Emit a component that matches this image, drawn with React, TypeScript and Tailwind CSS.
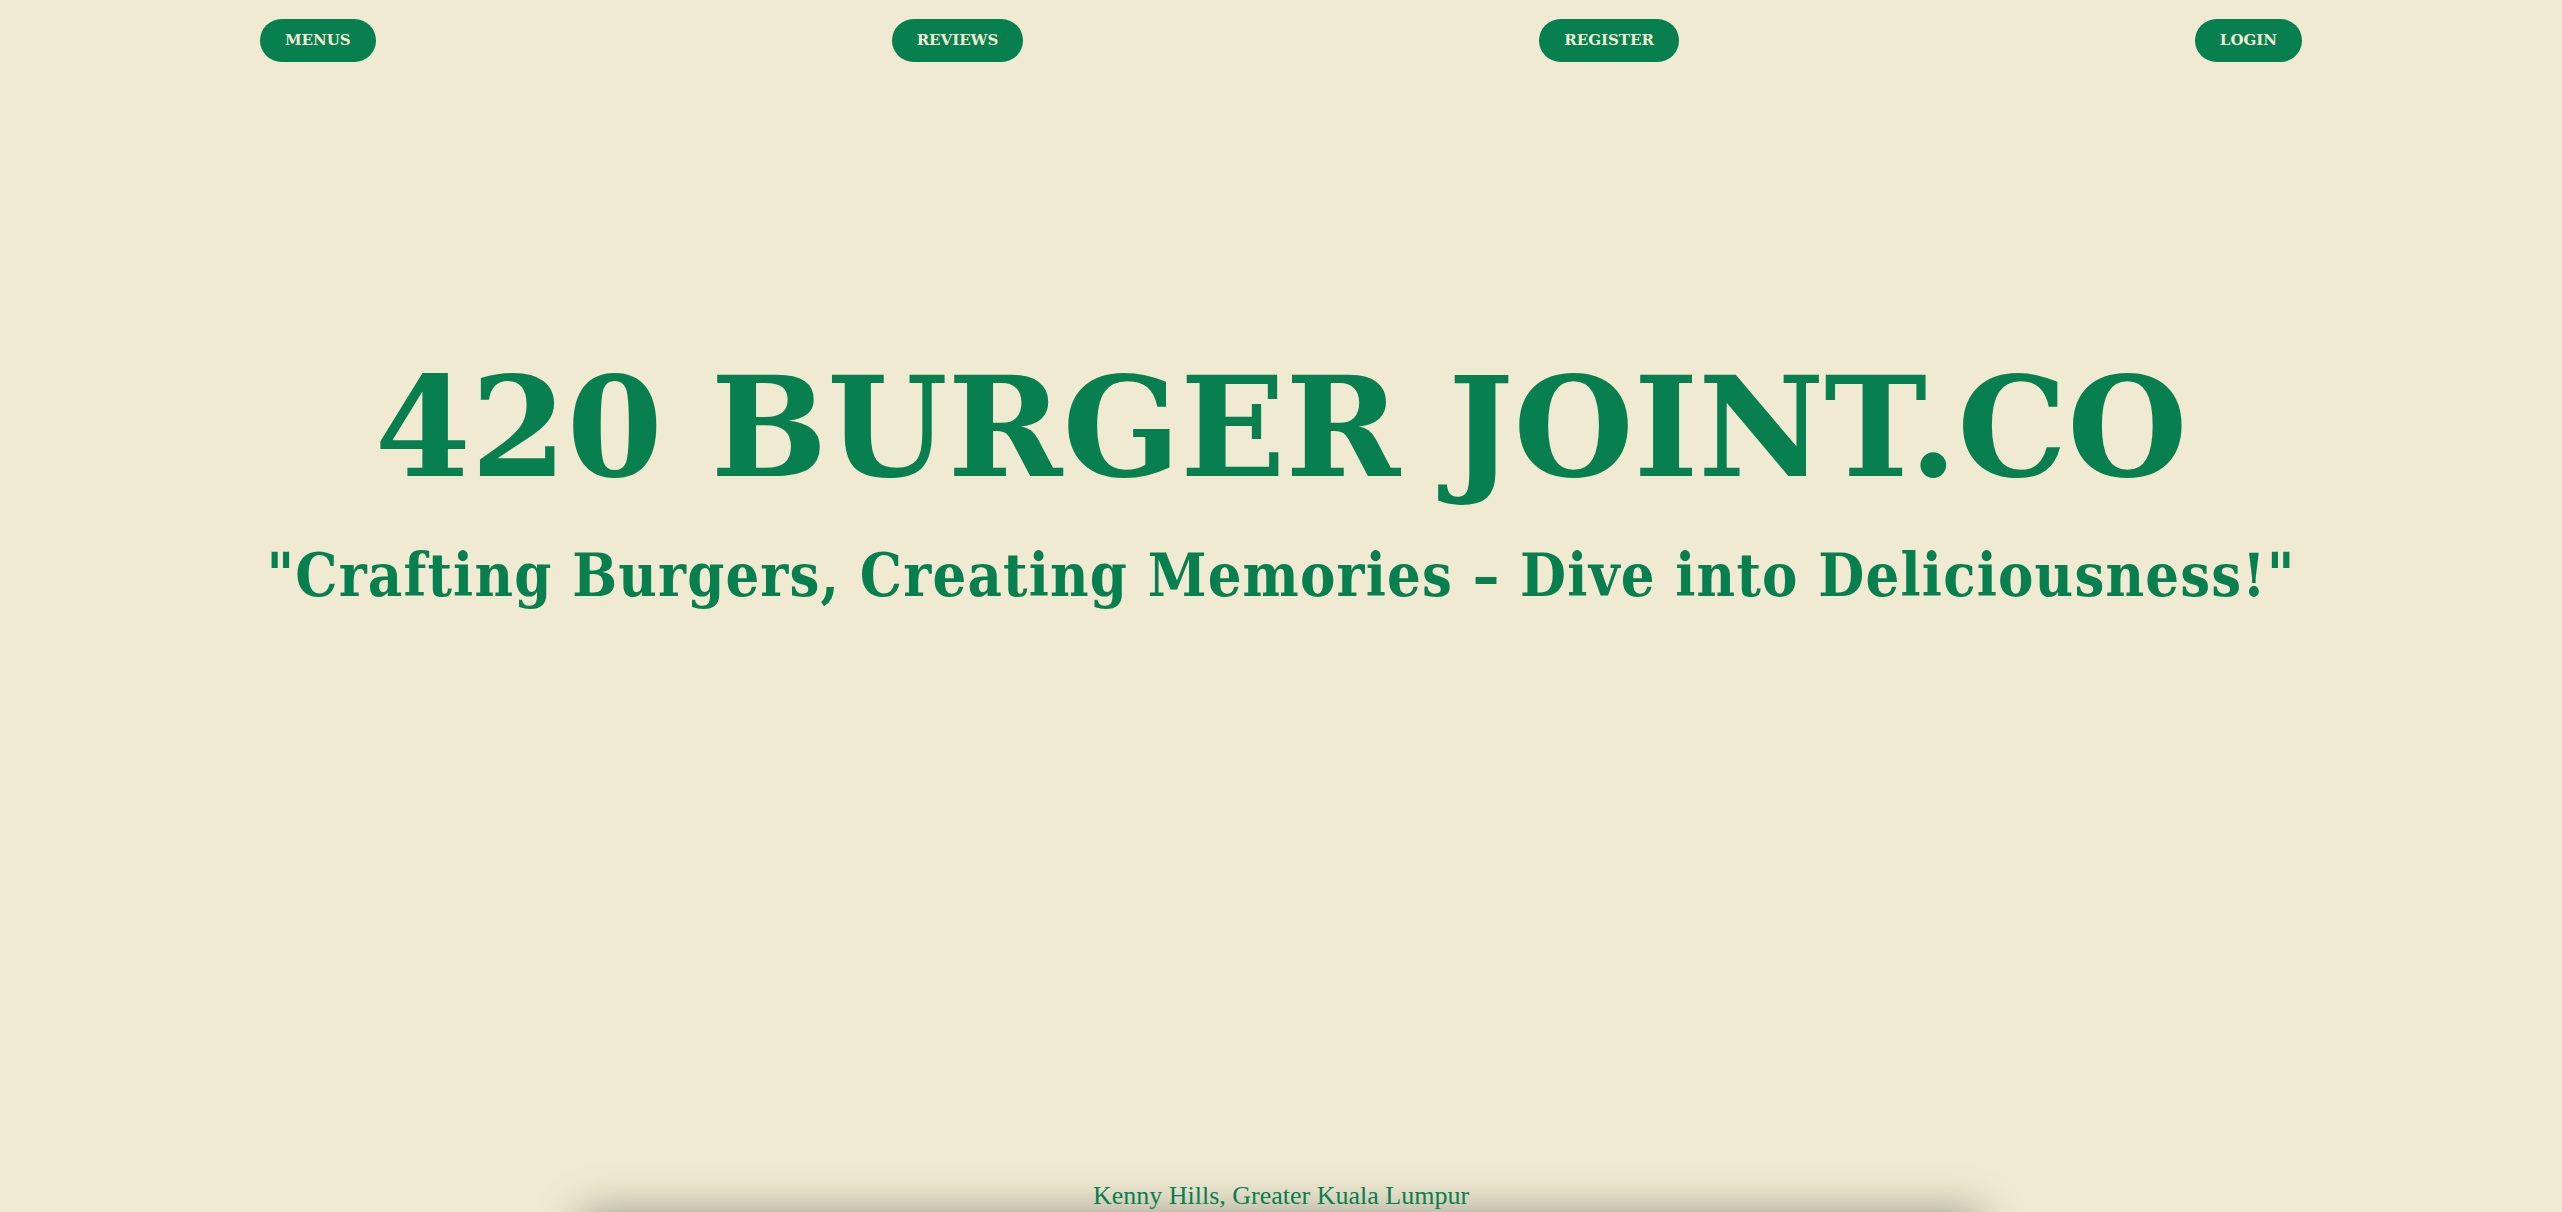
import React from "react";

const links = ["MENUS", "REVIEWS", "REGISTER", "LOGIN"];

export default function App() {
  return (
    <div className="bg-[#f0ead2] text-[#077f4f] font-['DejaVu_Serif',serif]">
      <section className="h-screen flex flex-col">
        {/* Nav */}
        <nav className="w-[2042px] mx-auto pt-[19px] flex justify-between">
          {links.map((l) => (
            <a
              key={l}
              href="#"
              className="h-[43px] px-[25px] rounded-full bg-[#077f4f] text-[#f0ead2] font-bold text-[15px] flex items-center"
            >
              {l}
            </a>
          ))}
        </nav>

        {/* Hero */}
        <div className="mt-[297px] flex flex-col items-center text-center">
          <h1 className="text-[138px] leading-none font-bold">
            420 BURGER JOINT.CO
          </h1>
          <p className="mt-[49px] text-[59px] leading-none font-bold font-stretch-condensed tracking-[0.02em]">
            "Crafting Burgers, Creating Memories – Dive into Deliciousness!"
          </p>
        </div>

        <div className="flex-1" />

        {/* Footer */}
        <p className="text-center text-[26px] leading-[32px] font-['Liberation_Serif',serif]">
          Kenny Hills, Greater Kuala Lumpur
        </p>
      </section>

      <div className="w-[1400px] mx-auto h-[400px] bg-[#f0ead2] shadow-[0_0_40px_rgba(0,0,0,0.35)]" />
    </div>
  );
}
